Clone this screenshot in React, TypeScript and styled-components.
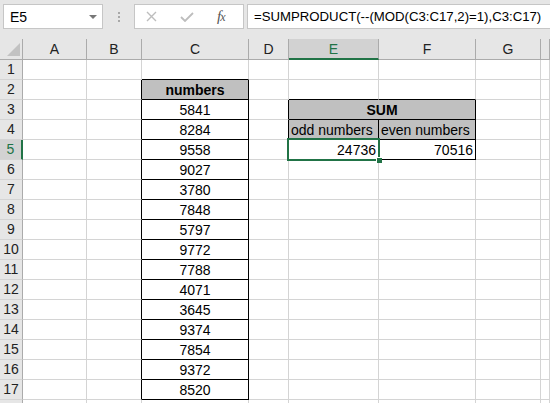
import React from "react";
import styled, { createGlobalStyle } from "styled-components";

const GlobalStyle = createGlobalStyle`
  html, body {
    margin: 0;
    padding: 0;
    background: #ffffff;
    overflow: hidden;
  }
  body {
    font-family: "Liberation Sans", Arial, sans-serif;
  }
`;

const colors = {
  chrome: "#e6e6e6",
  grid: "#d4d4d4",
  headerLine: "#ababab",
  selectedHeader: "#d2d2d2",
  green: "#217346",
  fill: "#c0c0c0",
  text: "#000",
};

const Page = styled.div`
  width: 550px;
  height: 403px;
  overflow: hidden;
  background: #fff;
`;

const FormulaBar = styled.div`
  display: flex;
  align-items: flex-start;
  height: 39px;
  box-sizing: border-box;
  padding: 4px 0 0 3px;
  background: ${colors.chrome};
`;

const Box = styled.div<{ $width?: number }>`
  display: flex;
  align-items: center;
  box-sizing: border-box;
  height: 25px;
  background: #fff;
  border: 1px solid #c6c6c6;
  width: ${(p) => (p.$width ? `${p.$width}px` : "auto")};
  flex: ${(p) => (p.$width ? "none" : "1 1 0")};
  min-width: 0;
  font-size: 14px;
  color: #000;
`;

const NameBox = styled(Box)`
  padding-left: 6px;
  justify-content: space-between;
  padding-right: 5px;
`;

const Caret = styled.span`
  width: 0;
  height: 0;
  border-left: 4px solid transparent;
  border-right: 4px solid transparent;
  border-top: 4px solid #777;
`;

const Grip = styled.div`
  flex: none;
  width: 31px;
  height: 25px;
  display: flex;
  flex-direction: column;
  align-items: center;
  justify-content: center;
  gap: 2px;
  span {
    width: 2px;
    height: 2px;
    background: #a8a8a8;
  }
`;

const FxBox = styled(Box)`
  gap: 23px;
  padding-left: 11px;
  margin-right: 3px;
`;

const FxLabel = styled.span`
  font-family: "Liberation Serif", "Times New Roman", serif;
  font-style: italic;
  font-size: 15px;
  color: #555;
  letter-spacing: -1px;
  small {
    font-size: 12px;
  }
`;

const FormulaInput = styled(Box)`
  padding-left: 6px;
  border-right: none;
  white-space: nowrap;
  overflow: hidden;
  font-size: 13.2px;
`;

const Sheet = styled.div`
  display: grid;
  grid-template-columns: 23px 64px 55px 107px 40px 90px 97px 65px 1fr;
  grid-template-rows: 21px repeat(18, 20px);
`;

const ColHeader = styled.div<{ $selected?: boolean }>`
  box-sizing: border-box;
  background: ${(p) => (p.$selected ? colors.selectedHeader : colors.chrome)};
  border-right: 1px solid ${colors.headerLine};
  border-bottom: ${(p) =>
    p.$selected ? `2px solid ${colors.green}` : `1px solid ${colors.headerLine}`};
  color: ${(p) => (p.$selected ? colors.green : "#222")};
  font-size: 14px;
  line-height: 20px;
  text-align: center;
`;

const Corner = styled.div`
  box-sizing: border-box;
  background: ${colors.chrome};
  border-right: 1px solid ${colors.headerLine};
  border-bottom: 1px solid ${colors.headerLine};
  display: flex;
  align-items: flex-end;
  justify-content: flex-end;
  padding: 0 2px 3px 0;
  span {
    width: 0;
    height: 0;
    border-left: 13px solid transparent;
    border-bottom: 13px solid #c2c2c2;
  }
`;

const RowHeader = styled.div<{ $selected?: boolean }>`
  box-sizing: border-box;
  background: ${(p) => (p.$selected ? colors.selectedHeader : colors.chrome)};
  border-right: ${(p) =>
    p.$selected ? `2px solid ${colors.green}` : `1px solid ${colors.headerLine}`};
  border-bottom: 1px solid ${colors.grid};
  color: ${(p) => (p.$selected ? colors.green : "#222")};
  font-size: 14px;
  line-height: 19px;
  text-align: center;
`;

const Cell = styled.div<{
  $bold?: boolean;
  $fill?: boolean;
  $align?: "left" | "center" | "right";
  $rb?: boolean;
  $bb?: boolean;
  $span?: number;
}>`
  position: relative;
  box-sizing: border-box;
  grid-column: ${(p) => (p.$span ? `span ${p.$span}` : "auto")};
  border-right: 1px solid ${(p) => (p.$rb ? "#000" : colors.grid)};
  border-bottom: 1px solid ${(p) => (p.$bb ? "#000" : colors.grid)};
  background: ${(p) => (p.$fill ? colors.fill : "#fff")};
  font-size: 14px;
  font-weight: ${(p) => (p.$bold ? 700 : 400)};
  line-height: 20px;
  padding: 0 2px;
  text-align: ${(p) => p.$align || "left"};
  color: ${colors.text};
  white-space: nowrap;
`;

const Selection = styled.div`
  position: absolute;
  top: -2px;
  left: -2px;
  right: -2px;
  bottom: -2px;
  border: 2px solid ${colors.green};
  pointer-events: none;
  z-index: 2;
  &::after {
    content: "";
    position: absolute;
    right: -4px;
    bottom: -4px;
    width: 5px;
    height: 5px;
    background: ${colors.green};
    border: 1px solid #fff;
    border-right: none;
    border-bottom: none;
  }
`;

type CellSpec = {
  text?: string;
  bold?: boolean;
  fill?: boolean;
  align?: "left" | "center" | "right";
  rb?: boolean;
  bb?: boolean;
  span?: number;
  selected?: boolean;
};

const columns = ["A", "B", "C", "D", "E", "F", "G", ""];
const numbers = [
  "5841", "8284", "9558", "9027", "3780", "7848", "5797", "9772",
  "7788", "4071", "3645", "9374", "7854", "9372", "8520",
];

const buildRow = (r: number): CellSpec[] => {
  const inNumbers = r >= 2 && r <= 17;
  const inSum = r >= 3 && r <= 5;
  const A: CellSpec = {};
  const B: CellSpec = { rb: inNumbers };
  const C: CellSpec = {
    rb: inNumbers,
    bb: r === 1 || inNumbers,
    align: "center",
  };
  if (r === 2) {
    C.text = "numbers";
    C.bold = true;
    C.fill = true;
  } else if (inNumbers) {
    C.text = numbers[r - 3];
  }
  const D: CellSpec = { rb: inSum };
  const G: CellSpec = {};
  const H: CellSpec = {};
  if (r === 3) {
    return [A, B, C, D, { text: "SUM", bold: true, fill: true, align: "center", rb: true, bb: true, span: 2 }, G, H];
  }
  const E: CellSpec = { rb: inSum, bb: r === 2 || inSum };
  const F: CellSpec = { rb: inSum, bb: r === 2 || inSum };
  if (r === 4) {
    Object.assign(E, { text: "odd numbers", fill: true });
    Object.assign(F, { text: "even numbers", fill: true });
  }
  if (r === 5) {
    Object.assign(E, { text: "24736", align: "right", selected: true });
    Object.assign(F, { text: "70516", align: "right" });
  }
  return [A, B, C, D, E, F, G, H];
};

// rows 1-17 are visible; an 18th row only peeks in at the bottom edge
const rows = Array.from({ length: 18 }, (_, i) => i + 1);

const CrossIcon = () => (
  <svg width="11" height="11" viewBox="0 0 11 11">
    <path d="M1 1 L10 10 M10 1 L1 10" stroke="#bdbdbd" strokeWidth="1.4" fill="none" />
  </svg>
);

const CheckIcon = () => (
  <svg width="14" height="10" viewBox="0 0 14 10">
    <path d="M1 5 L5 9 L13 1" stroke="#bdbdbd" strokeWidth="1.8" fill="none" />
  </svg>
);

export default function App() {
  return (
    <Page>
      <GlobalStyle />
      <FormulaBar>
        <NameBox $width={100}>
          <span>E5</span>
          <Caret />
        </NameBox>
        <Grip>
          <span />
          <span />
          <span />
        </Grip>
        <FxBox $width={110}>
          <CrossIcon />
          <CheckIcon />
          <FxLabel>
            f<small>x</small>
          </FxLabel>
        </FxBox>
        <FormulaInput>=SUMPRODUCT(--(MOD(C3:C17,2)=1),C3:C17)</FormulaInput>
      </FormulaBar>
      <Sheet>
        <Corner>
          <span />
        </Corner>
        {columns.map((c) => (
          <ColHeader key={c || "H"} $selected={c === "E"}>
            {c}
          </ColHeader>
        ))}
        {rows.map((r) => (
          <React.Fragment key={r}>
            <RowHeader $selected={r === 5}>{r <= 17 ? r : ""}</RowHeader>
            {buildRow(r).map((cell, i) => (
              <Cell
                key={i}
                $bold={cell.bold}
                $fill={cell.fill}
                $align={cell.align}
                $rb={cell.rb}
                $bb={cell.bb}
                $span={cell.span}
              >
                {cell.text}
                {cell.selected && <Selection />}
              </Cell>
            ))}
          </React.Fragment>
        ))}
      </Sheet>
    </Page>
  );
}
